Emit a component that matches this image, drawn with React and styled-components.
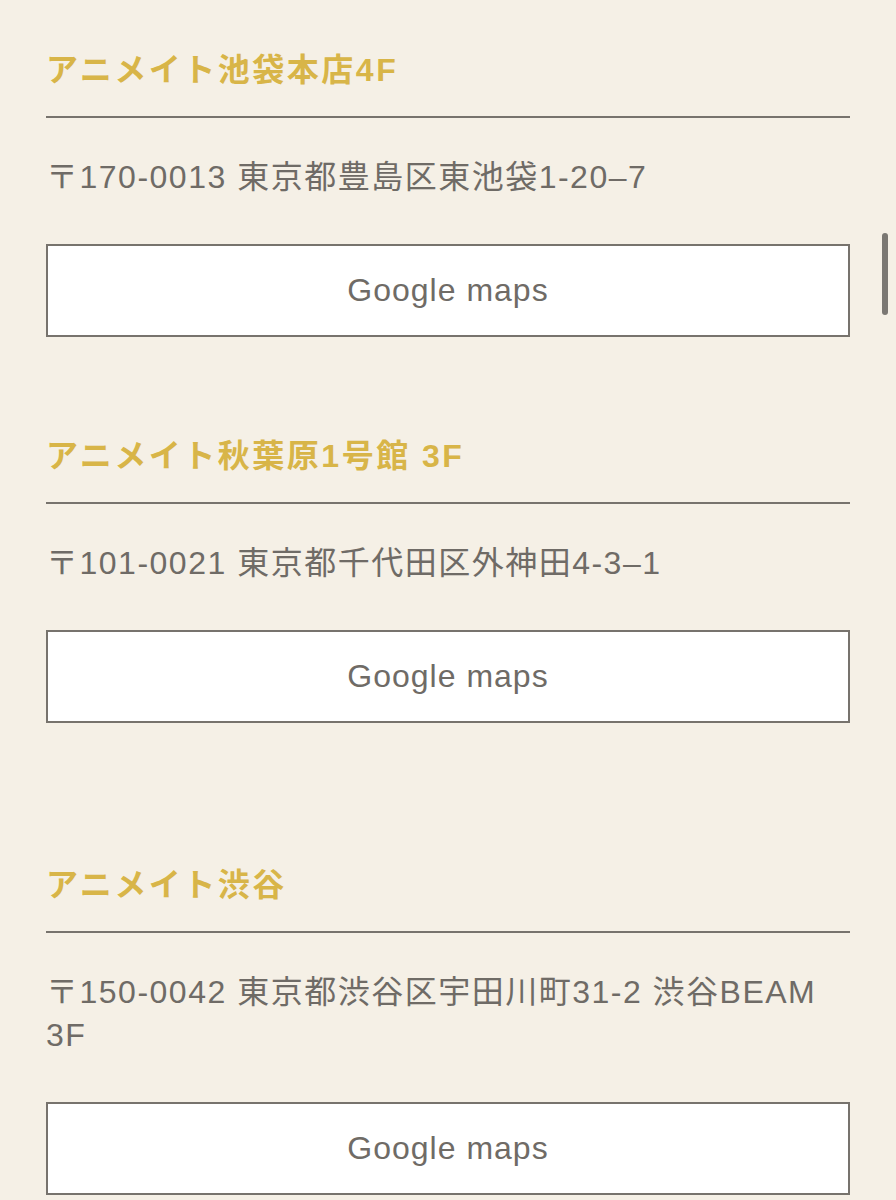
import React from 'react'
import styled, { createGlobalStyle } from 'styled-components'

const GlobalStyle = createGlobalStyle`
  html, body {
    margin: 0;
    padding: 0;
    background: #f5f0e6;
    overflow: hidden;
  }
  body {
    font-family: "Liberation Sans", "Noto Sans CJK JP", sans-serif;
  }
`;

const Page = styled.div`
  min-height: 1200px;
  padding: 46px 46px 0;
  background: #f5f0e6;
`;

const Shop = styled.section`
  margin-top: ${p => p.$gap || 0}px;
`;

const Title = styled.h2`
  margin: 0;
  font-size: 32px;
  line-height: 48px;
  font-weight: 700;
  color: #d8b548;
  letter-spacing: 2.5px;
`;

const Rule = styled.hr`
  margin: 22px 0 0;
  border: none;
  height: 2px;
  background: #77736d;
`;

const Address = styled.p`
  margin: 38px 0 0;
  font-size: 32px;
  line-height: 43px;
  letter-spacing: 1.5px;
  color: #6f6b66;
`;

const MapButton = styled.a`
  display: flex;
  align-items: center;
  justify-content: center;
  margin-top: 45px;
  height: 89px;
  background: #fff;
  border: 2px solid #77736d;
  font-size: 32px;
  letter-spacing: 1px;
  color: #6f6b66;
  text-decoration: none;
  cursor: pointer;
`;

const ScrollThumb = styled.div`
  position: fixed;
  top: 233px;
  right: 8px;
  width: 6px;
  height: 82px;
  border-radius: 3px;
  background: #7b7873;
`;

const shops = [
  { name: 'アニメイト池袋本店4F', address: '〒170-0013 東京都豊島区東池袋1-20–7', gap: 0 },
  { name: 'アニメイト秋葉原1号館 3F', address: '〒101-0021 東京都千代田区外神田4-3–1', gap: 95 },
  { name: 'アニメイト渋谷', address: '〒150-0042 東京都渋谷区宇田川町31-2 渋谷BEAM 3F', gap: 138 },
];

const App = () => {
  return (
    <>
      <GlobalStyle />
      <Page>
        {shops.map(s => (
          <Shop key={s.name} $gap={s.gap}>
            <Title>{s.name}</Title>
            <Rule />
            <Address>{s.address}</Address>
            <MapButton>Google maps</MapButton>
          </Shop>
        ))}
      </Page>
      <ScrollThumb />
    </>
  )
}

export default App
